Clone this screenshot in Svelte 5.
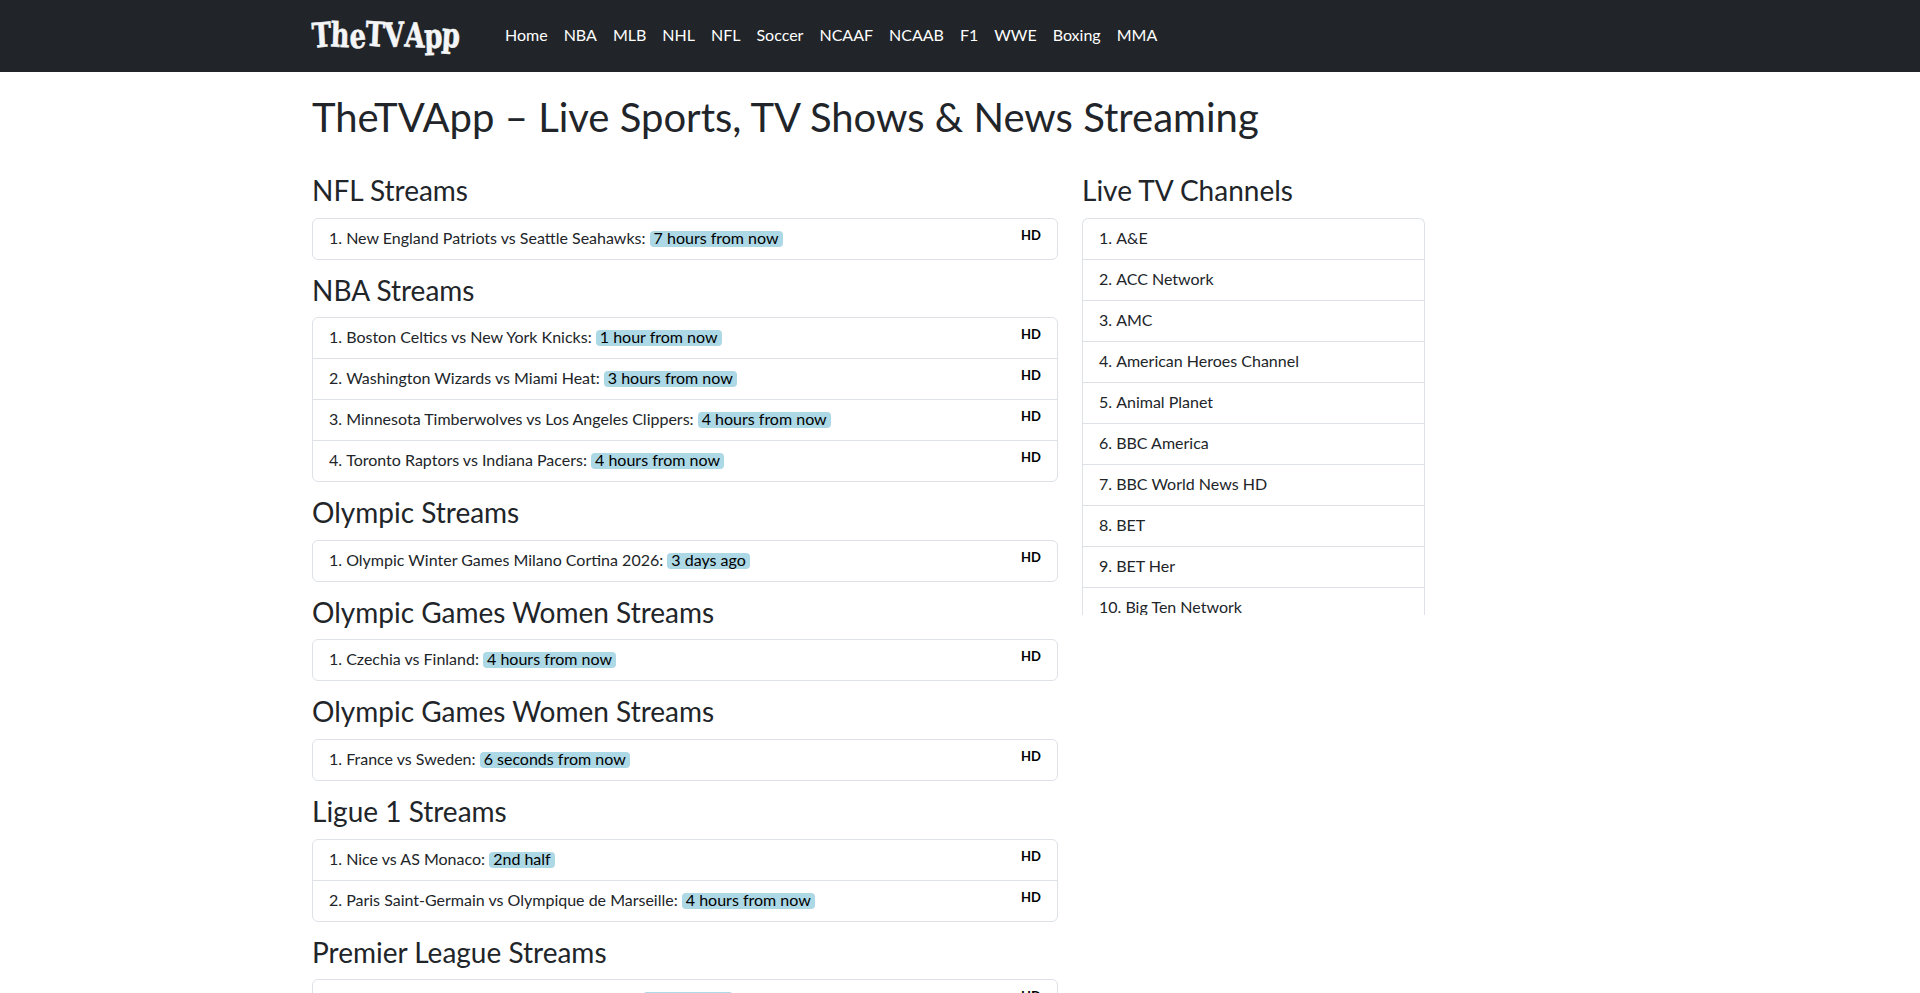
<script>
  const nav = ["Home", "NBA", "MLB", "NHL", "NFL", "Soccer", "NCAAF", "NCAAB", "F1", "WWE", "Boxing", "MMA"];

  // logo letters sit a little crooked, like the brush lettering of the original
  const logo = [
    ["T", -4, 0], ["h", 2, 0], ["e", -3, 1], ["T", 3, -1],
    ["V", -3, 0], ["A", 3, 0], ["p", -2, 1], ["p", 4, 0]
  ];

  const sections = [
    { title: "NFL Streams", games: [["New England Patriots vs Seattle Seahawks", "7 hours from now"]] },
    {
      title: "NBA Streams",
      games: [
        ["Boston Celtics vs New York Knicks", "1 hour from now"],
        ["Washington Wizards vs Miami Heat", "3 hours from now"],
        ["Minnesota Timberwolves vs Los Angeles Clippers", "4 hours from now"],
        ["Toronto Raptors vs Indiana Pacers", "4 hours from now"]
      ]
    },
    { title: "Olympic Streams", games: [["Olympic Winter Games Milano Cortina 2026", "3 days ago"]] },
    { title: "Olympic Games Women Streams", games: [["Czechia vs Finland", "4 hours from now"]] },
    { title: "Olympic Games Women Streams", games: [["France vs Sweden", "6 seconds from now"]] },
    {
      title: "Ligue 1 Streams",
      games: [
        ["Nice vs AS Monaco", "2nd half"],
        ["Paris Saint-Germain vs Olympique de Marseille", "4 hours from now"]
      ]
    },
    { title: "Premier League Streams", games: [["Manchester United vs Nottingham Forest", "2 hours ago"]] }
  ];

  const channels = [
    "A&E", "ACC Network", "AMC", "American Heroes Channel", "Animal Planet",
    "BBC America", "BBC World News HD", "BET", "BET Her", "Big Ten Network", "Bloomberg"
  ];
</script>

<nav class="navbar">
  <div class="container nav-inner">
    <div class="brand">
      <span class="logo">
        {#each logo as [letter, turn, drop]}
          <span class="letter" style="transform: translateY({drop}px) rotate({turn}deg)">{letter}</span>
        {/each}
      </span>
    </div>
    <ul class="nav-links">
      {#each nav as item}
        <li>{item}</li>
      {/each}
    </ul>
  </div>
</nav>

<main class="container">
  <h1>TheTVApp – Live Sports, TV Shows &amp; News Streaming</h1>
  <div class="columns">
    <div class="left">
      {#each sections as section}
        <h3>{section.title}</h3>
        <ol class="list">
          {#each section.games as game}
            <li class="item">
              <span class="game">{game[0]}: <span class="time">{game[1]}</span></span>
              <span class="hd">HD</span>
            </li>
          {/each}
        </ol>
      {/each}
    </div>
    <div class="right">
      <h3>Live TV Channels</h3>
      <ol class="list channels">
        {#each channels as channel}
          <li class="item"><span class="game">{channel}</span></li>
        {/each}
      </ol>
    </div>
  </div>
</main>

<style>
  :global(body) {
    font-family: Lato, sans-serif;
    font-size: 16px;
    line-height: 1.5;
    color: #212529;
    background: #fff;
  }
  .container {
    width: 1296px;
    margin: 0 auto;
  }
  .navbar {
    background: #212529;
    height: 72px;
  }
  .nav-inner {
    display: flex;
    align-items: center;
    height: 100%;
  }
  .brand {
    width: 185px;
    padding-bottom: 3px;
  }
  .logo {
    display: flex;
    width: 174px;
    transform: scaleX(0.85);
    transform-origin: left center;
    font-family: "DejaVu Serif", serif;
    font-stretch: condensed;
    font-weight: 700;
    font-size: 34px;
    line-height: 1;
    color: #f4f5f6;
    -webkit-text-stroke: 0.6px #f4f5f6;
    letter-spacing: -0.5px;
  }
  .letter {
    display: inline-block;
  }
  .nav-links {
    display: flex;
    list-style: none;
    margin: 0;
    padding: 0 0 2px;
  }
  .nav-links li {
    padding: 0 8px;
    color: #fff;
  }
  h1 {
    font-size: 40px;
    font-weight: 400;
    line-height: 1.2;
    margin: 21px 0 35px;
  }
  h3 {
    font-size: 28px;
    font-weight: 400;
    line-height: 1.2;
    margin: -2px 0 10px;
  }
  .columns {
    display: flex;
    gap: 24px;
    align-items: flex-start;
  }
  .left {
    width: 746px;
  }
  .right {
    width: 343px;
  }
  .list {
    margin: 0 0 16px;
    padding: 0;
    list-style: none;
    counter-reset: row;
    border: 1px solid #dee2e6;
    border-radius: 6px;
  }
  .channels {
    height: 396px;
    overflow: hidden;
    border-bottom: none;
    border-radius: 6px 6px 0 0;
    margin-bottom: 0;
  }
  .item {
    counter-increment: row;
    display: flex;
    justify-content: space-between;
    height: 40px;
    padding: 7px 16px 9px;
    box-sizing: border-box;
  }
  .item:not(:first-child) {
    height: 41px;
    border-top: 1px solid #dee2e6;
  }
  .item::before {
    content: counter(row) ".\00a0";
  }
  .game {
    flex: 1;
  }
  .time {
    display: inline-block;
    height: 16px;
    line-height: 14px;
    background: #add8e6;
    color: #000;
    border-radius: 4px;
    padding: 0 4px;
  }
  .hd {
    font-size: 13px;
    font-weight: 700;
    color: #000;
    line-height: 18px;
  }
</style>
